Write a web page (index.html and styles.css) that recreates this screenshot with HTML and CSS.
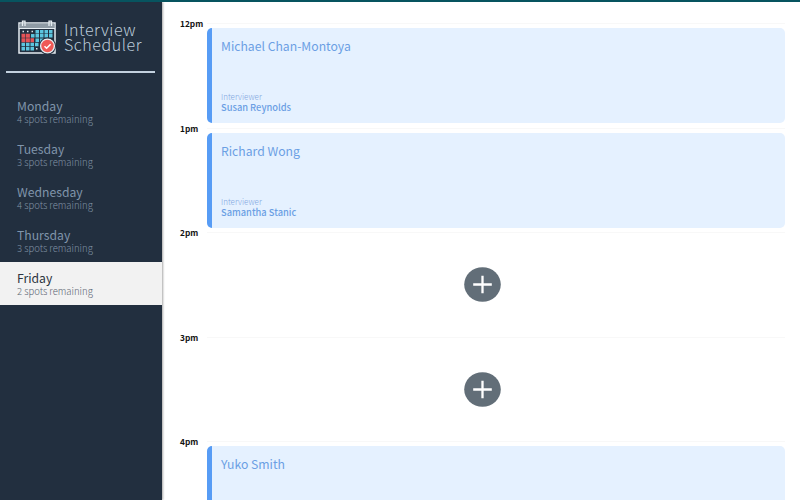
FILE: index.html
```html
<!DOCTYPE html>
<html lang="en">
<head>
<meta charset="utf-8">
<title>Interview Scheduler</title>
<link rel="stylesheet" href="styles.css">
</head>
<body>
<main class="layout">
  <aside class="sidebar">
    <div class="brand">
      <svg class="logo" viewBox="0 0 38 34" width="38" height="34">
        <rect x="1" y="3" width="36" height="30" fill="#222f3f" stroke="#e6edf2" stroke-width="1.5"/>
        <rect x="1.7" y="3.7" width="34.6" height="4.500" fill="#8f9ba5"/>
        <path d="M1 8.500h36" stroke="#e6edf2"/>
        <path d="M4.500 6V1.200h2.500v4.800M31 6V1.200h2.500v4.800" fill="none" stroke="#e6edf2" stroke-width="1.300"/>
        <path d="M4.500 11.500h1.500M9 11.500h1.500M13.500 11.500h1.500" stroke="#dce5ea" stroke-width="1.300"/>
        <path d="M17.500 11.800h17.500M17.500 15.800h17.500M17.500 20.200h8M3.500 24.500h17M3.500 28.800h12.500" stroke="#5cc5df" stroke-width="3.500" stroke-dasharray="3.500 1"/>
        <path d="M3.500 15.800h8.500M3.500 20.200h12.500" stroke="#e55357" stroke-width="3.900" stroke-dasharray="3.900 .600"/>
        <path d="M13 15.800h3.500" stroke="#5cc5df" stroke-width="3.500"/>
        <path d="M18 28.800h1.500" stroke="#dce5ea" stroke-width="1.500"/>
        <circle cx="29.500" cy="26" r="8.500" fill="#222f3f"/>
        <circle cx="29.500" cy="26" r="6.900" fill="#ef5956" stroke="#e6edf2" stroke-width="1.400"/>
        <path d="M26.500 26.200l2.100 2 4-4" fill="none" stroke="#fff" stroke-width="1.500"/>
      </svg>
      <h1 class="brand-name">Interview<br>Scheduler</h1>
    </div>
    <hr class="rule">
    <ul class="days">
      <li class="day"><span class="day-name">Monday</span><span class="spots">4 spots remaining</span></li>
      <li class="day"><span class="day-name">Tuesday</span><span class="spots">3 spots remaining</span></li>
      <li class="day"><span class="day-name">Wednesday</span><span class="spots">4 spots remaining</span></li>
      <li class="day"><span class="day-name">Thursday</span><span class="spots">3 spots remaining</span></li>
      <li class="day selected"><span class="day-name">Friday</span><span class="spots">2 spots remaining</span></li>
    </ul>
  </aside>
  <section class="schedule">
    <article class="slot">
      <header class="hour"><span class="time">12pm</span></header>
      <div class="card"><h2 class="student">Michael Chan-Montoya</h2><span class="role">Interviewer</span><span class="interviewer">Susan Reynolds</span></div>
    </article>
    <article class="slot">
      <header class="hour"><span class="time">1pm</span></header>
      <div class="card"><h2 class="student">Richard Wong</h2><span class="role">Interviewer</span><span class="interviewer">Samantha Stanic</span></div>
    </article>
    <article class="slot">
      <header class="hour"><span class="time">2pm</span></header>
      <div class="empty"><svg width="37" height="35" viewBox="0 0 37 35"><ellipse cx="18.500" cy="17.500" rx="18.300" ry="17.200" fill="#626e78"/><path d="M9.200 17.500h18.600M18.500 8.800v17.400" stroke="#fff" stroke-width="2.300"/></svg></div>
    </article>
    <article class="slot">
      <header class="hour"><span class="time">3pm</span></header>
      <div class="empty"><svg width="37" height="35" viewBox="0 0 37 35"><ellipse cx="18.500" cy="17.500" rx="18.300" ry="17.200" fill="#626e78"/><path d="M9.200 17.500h18.600M18.500 8.800v17.400" stroke="#fff" stroke-width="2.300"/></svg></div>
    </article>
    <article class="slot">
      <header class="hour"><span class="time">4pm</span></header>
      <div class="card"><h2 class="student">Yuko Smith</h2></div>
    </article>
  </section>
</main>
</body>
</html>
```
FILE: styles.css
```css
* { box-sizing: border-box; }
body {
  margin: 0;
  height: 500px;
  overflow: hidden;
  background: #fff;
  border-top: 2px solid #07545f;
  font-family: "Noto Sans CJK SC", "Open Sans", sans-serif;
}
h1, h2, ul { margin: 0; padding: 0; font-weight: 400; }
.layout { display: flex; height: 498px; overflow: hidden; }
.sidebar {
  flex: none;
  width: 162px;
  background: #222f3f;
  box-shadow: 1px 0 2px rgba(0, 0, 0, .35);
}
.brand { display: flex; gap: 8.500px; height: 69px; padding: 18px 0 0 17.500px; }
.logo { flex: none; }
.brand-name { font-size: 16px; line-height: 15px; font-weight: 300; color: #bccbda; padding-top: 2px; letter-spacing: .55px; }
.rule { margin: 0 7px 0 6px; border: 0; height: 2px; background: #c3d1df; }
.days { list-style: none; padding-top: 17px; }
.day { display: flex; flex-direction: column; height: 43.100px; padding: 8px 0 0 17px; color: #8095ab; }
.day-name { font-size: 12.200px; line-height: 16px; }
.spots { font-size: 9.500px; line-height: 11px; font-weight: 300; color: #8091a4; }
.selected { background: #f2f2f2; color: #2b3440; }
.selected .spots { color: #5c6672; }
.schedule { flex: 1; padding: 17.400px 15px 0 18px; }
.slot { height: 104.400px; }
.hour { display: flex; align-items: center; height: 9px; }
.hour::after { content: ""; flex: 1; height: 1px; background: #f8f8f8; }
.time { width: 27px; font-size: 8.300px; line-height: 9px; font-weight: 700; color: #111; }
.card {
  display: flex;
  flex-direction: column;
  height: 95px;
  margin-left: 27px;
  padding: 8.900px 0 0 9px;
  border-left: 5px solid #579cf5;
  border-radius: 5px;
  background: #e5f1ff;
  color: #6b9fe4;
}
.student { font-size: 12.200px; line-height: 18px; }
.role { margin-top: 37px; font-size: 8px; line-height: 10px; font-weight: 300; color: #80a5e0; }
.interviewer { font-size: 9.300px; line-height: 11px; font-weight: 500; }
.empty { display: flex; align-items: center; justify-content: center; height: 95px; }
```
